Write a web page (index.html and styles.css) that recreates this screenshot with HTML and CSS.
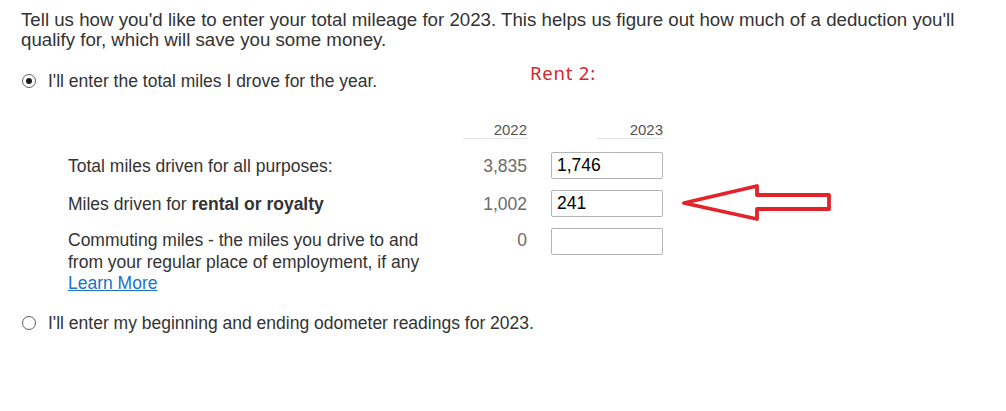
FILE: index.html
```html
<!DOCTYPE html>
<html lang="en">
<head>
<meta charset="utf-8">
<title>Mileage</title>
<link rel="stylesheet" href="styles.css">
</head>
<body>
<main class="page">
  <p class="intro">Tell us how you'd like to enter your total mileage for 2023. This helps us figure out how much of a deduction you'll qualify for, which will save you some money.</p>

  <label class="radio-row first">
    <span class="radio checked"></span>
    <span class="radio-text">I'll enter the total miles I drove for the year.</span>
  </label>

  <div class="miles-grid">
    <div class="blank"></div>
    <div class="year-head">2022</div>
    <div class="year-head right">2023</div>

    <div class="label">Total miles driven for all purposes:</div>
    <div class="prior">3,835</div>
    <input class="field" type="text" value="1,746">

    <div class="label">Miles driven for <b>rental or royalty</b></div>
    <div class="prior">1,002</div>
    <input class="field" type="text" value="241">

    <div class="label top">Commuting miles - the miles you drive to and from your regular place of employment, if any<div><a href="#" class="link">Learn More</a></div></div>
    <div class="prior top">0</div>
    <input class="field top" type="text" value="">
  </div>

  <label class="radio-row second">
    <span class="radio"></span>
    <span class="radio-text">I'll enter my beginning and ending odometer readings for 2023.</span>
  </label>
</main>

<div class="note">Rent 2:</div>
<svg class="arrow" width="160" height="44" viewBox="0 0 160 44" aria-hidden="true">
  <path d="M4 21 L77 4 L77 13 L149 13 L149 27 L77 27 L77 37 Z" fill="none" stroke="#e3232b" stroke-width="3.8" stroke-linejoin="round"/>
</svg>
</body>
</html>
```

FILE: styles.css
```css
html, body {
  margin: 0;
  padding: 0;
  background: #ffffff;
}

body {
  position: relative;
  width: 1006px;
  height: 411px;
  overflow: hidden;
  font-family: "Liberation Sans", Arial, sans-serif;
  color: #333333;
  font-size: 17.5px;
}

.page {
  padding: 10px 0 0 21px;
}

.intro {
  margin: 0;
  max-width: 955px;
  font-size: 18.7px;
  line-height: 19.5px;
}

.radio-row {
  display: flex;
  align-items: center;
  line-height: 20px;
  cursor: pointer;
}

.radio-row.first {
  margin-top: 22px;
}

.radio-row.second {
  margin-top: 18px;
}

.radio {
  box-sizing: border-box;
  width: 14px;
  height: 14px;
  margin-left: 1px;
  margin-right: 12px;
  border: 1px solid #5e5e5e;
  border-radius: 50%;
  display: flex;
  align-items: center;
  justify-content: center;
  flex: none;
}

.radio.checked::after {
  content: "";
  width: 6px;
  height: 6px;
  border-radius: 50%;
  background: #1e1e1e;
}

.miles-grid {
  margin: 31px 0 0 47px;
  display: grid;
  grid-template-columns: 371px 64px 112px;
  column-gap: 24px;
  row-gap: 11px;
  align-items: center;
}

.year-head {
  font-size: 15px;
  line-height: 16px;
  color: #555555;
  text-align: right;
  border-bottom: 1px solid #e4e4e4;
  margin-bottom: 2px;
}

.year-head.right {
  width: 66px;
  justify-self: end;
}

.label {
  line-height: 20px;
}

.label.top {
  align-self: start;
  line-height: 21.5px;
  padding-top: 2px;
  max-width: 365px;
}

.prior {
  text-align: right;
  color: #6b6b6b;
  line-height: 20px;
}

.prior.top {
  align-self: start;
  line-height: 21.5px;
  padding-top: 2px;
}

.field {
  box-sizing: border-box;
  width: 112px;
  height: 27px;
  margin: 0;
  padding: 0 5px;
  border: 1px solid #b4b4b4;
  border-radius: 2px;
  font-family: "Liberation Sans", Arial, sans-serif;
  font-size: 17.5px;
  color: #000000;
  background: #ffffff;
  outline: none;
}

.field.top {
  align-self: start;
}

.link {
  color: #1a73c6;
  text-decoration: underline;
}

.note {
  position: absolute;
  left: 530px;
  top: 61px;
  font-family: "Noto Sans", "Open Sans", sans-serif;
  font-size: 18.5px;
  line-height: 24px;
  letter-spacing: 0.8px;
  color: #d7252d;
}

.arrow {
  position: absolute;
  left: 680px;
  top: 182px;
}
```
